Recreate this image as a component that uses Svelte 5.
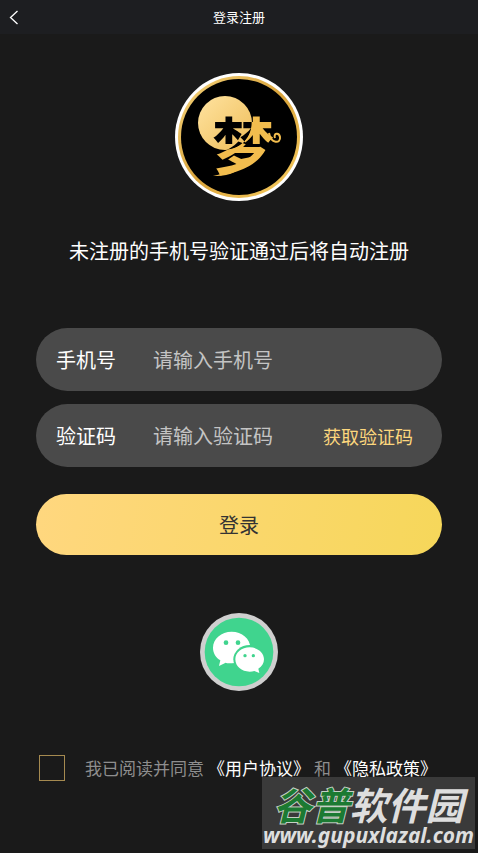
<script>
    let phone = $state('')
    let code = $state('')
    let agreed = $state(false)

    function login(event) {
        event.preventDefault()
    }
</script>

<div class="page">
    <header>
        <button class="back" aria-label="返回">
            <svg viewBox="0 0 10 16" width="10" height="16">
                <path d="M8.5 2 L1.5 8.5 L8.5 15" />
            </svg>
        </button>
        <h1>登录注册</h1>
    </header>

    <main>
        <svg class="logo" viewBox="0 0 128 128">
            <defs>
                <linearGradient id="ring" x1="0" y1="0" x2="1" y2="1">
                    <stop offset="0" stop-color="#f6d57e" />
                    <stop offset="0.5" stop-color="#d9a33a" />
                    <stop offset="1" stop-color="#f9cf62" />
                </linearGradient>
                <linearGradient id="moon" x1="0" y1="0" x2="1" y2="1">
                    <stop offset="0" stop-color="#ffe3a0" />
                    <stop offset="1" stop-color="#eebd59" />
                </linearGradient>
                <!-- black over the moon, gold outside it -->
                <radialGradient id="ink" gradientUnits="userSpaceOnUse" cx="50" cy="50" r="27">
                    <stop offset="0.97" stop-color="#000" />
                    <stop offset="1" stop-color="#f2bd4e" />
                </radialGradient>
            </defs>
            <circle cx="64" cy="64" r="64" fill="#fff" />
            <circle cx="64" cy="64" r="61" fill="url(#ring)" />
            <circle cx="64" cy="64" r="58" fill="#000" />
            <circle cx="50" cy="50" r="27" fill="url(#moon)" />
            <text x="37" y="97" fill="url(#ink)">梦</text>
            <path d="M94 60 C96 71 106 71 105 64 C104 59 98 60 100 65" fill="none" stroke="#f2bd4e" stroke-width="2" />
            <path d="M66 86 C60 95 50 101 38 103 C52 104 67 99 76 84 Z" fill="#f2bd4e" />
        </svg>

        <p class="tip">未注册的手机号验证通过后将自动注册</p>

        <form onsubmit={login}>
            <div class="field">
                <label for="phone">手机号</label>
                <input type="tel" id="phone" placeholder="请输入手机号" bind:value={phone}>
            </div>
            <div class="field">
                <label for="code">验证码</label>
                <input type="text" id="code" placeholder="请输入验证码" bind:value={code}>
                <button type="button" class="send">获取验证码</button>
            </div>
            <button type="submit" class="login">登录</button>
        </form>

        <button class="wechat" aria-label="微信登录">
            <svg viewBox="30 21 234 234">
                <circle cx="147" cy="138" r="117" fill="#cfcfcf" />
                <circle cx="147" cy="138" r="103" fill="#40d48e" />
                <path d="M125 77 C94 77 69 98 69 125 C69 141 77 154 91 163 L87 180 L107 170 C113 172 119 172 125 172 C156 172 181 152 181 125 C181 98 156 77 125 77 Z" fill="#fff" />
                <ellipse cx="179" cy="160" rx="49" ry="43" fill="#40d48e" />
                <path d="M179 124 C155 124 136 140 136 160 C136 181 155 197 179 197 C184 197 189 196 193 195 L208 201 L205 188 C216 181 222 171 222 160 C222 140 203 124 179 124 Z" fill="#fff" />
                <g fill="#40d48e">
                    <circle cx="108" cy="110" r="7" />
                    <circle cx="144" cy="110" r="7" />
                    <circle cx="165" cy="149" r="5" />
                    <circle cx="190" cy="149" r="5" />
                </g>
            </svg>
        </button>

        <div class="agree">
            <input type="checkbox" id="agree" bind:checked={agreed}>
            <div>
                <label for="agree">我已阅读并同意</label><a href="#user">《用户协议》</a>和<a href="#privacy">《隐私政策》</a>
            </div>
        </div>
    </main>

    <aside class="watermark">
        <div class="site"><span>谷普</span>软件园</div>
        <div class="url">www.gupuxlazal.com</div>
    </aside>
</div>

<style>
    :global(body) {
        background: #1a1a1a;
    }

    .page {
        position: relative;
        min-height: 100vh;
        color: #fff;
        font-family: "Noto Sans CJK SC", sans-serif;
        font-size: 20px;
    }

    button, input {
        font: inherit;
        color: inherit;
        background: none;
        border: 0;
        padding: 0;
        margin: 0;
    }

    button {
        cursor: pointer;
    }

    header {
        display: grid;
        grid-template-columns: 40px 1fr 40px;
        align-items: center;
        height: 34px;
        background: #1d1e21;
    }

    .back {
        display: flex;
        padding-left: 9px;
    }

    .back path {
        fill: none;
        stroke: #fff;
        stroke-width: 1.3;
    }

    h1 {
        margin: 0;
        padding-bottom: 2px;
        font-size: 13px;
        font-weight: 400;
        text-align: center;
    }

    main {
        display: flex;
        flex-direction: column;
        align-items: center;
        padding: 39px 36px 72px;
    }

    .logo {
        width: 128px;
        height: 128px;
    }

    .logo text {
        font-size: 62px;
        font-weight: 700;
    }

    .tip {
        margin: 34px 0 61px;
        line-height: 32px;
        white-space: nowrap;
    }

    form {
        width: 100%;
    }

    .field {
        display: flex;
        align-items: center;
        height: 63px;
        margin-bottom: 13px;
        padding: 0 29px 0 20px;
        border-radius: 32px;
        background: #4a4a4a;
    }

    .field label {
        width: 97px;
        flex-shrink: 0;
    }

    .field input {
        flex: 1;
        min-width: 0;
        outline: none;
    }

    .field input::placeholder {
        color: #c4c4c4;
        opacity: 1;
    }

    .send {
        flex-shrink: 0;
        color: #fdd77d;
        font-size: 18px;
    }

    .login {
        display: block;
        width: 100%;
        height: 61px;
        margin-top: 27px;
        border-radius: 32px;
        background: linear-gradient(100deg, #ffd77f, #f6d75a);
        color: #333;
    }

    .wechat {
        display: flex;
        width: 78px;
        height: 78px;
        margin-top: 58px;
    }

    .wechat svg {
        width: 100%;
    }

    .agree {
        display: flex;
        align-items: center;
        align-self: stretch;
        gap: 20px;
        margin-top: 64px;
        padding-left: 3px;
        color: #8e8e8e;
        font-size: 17px;
        line-height: 26px;
        white-space: nowrap;
    }

    .agree input {
        appearance: none;
        flex-shrink: 0;
        width: 26px;
        height: 26px;
        border: 1px solid #a58a50;
    }

    .agree input:checked {
        background: #fdd77d;
    }

    .agree a {
        margin: 0 4px;
        color: #fff;
        text-decoration: none;
    }

    .watermark {
        position: absolute;
        right: 3px;
        bottom: 4px;
        width: 213px;
        height: 72px;
        background: #3a3a3a;
        color: #dedede;
        font-style: italic;
        font-weight: 700;
        text-align: center;
        white-space: nowrap;
    }

    .site {
        padding-top: 6px;
        font-size: 38px;
        line-height: 42px;
    }

    .site span {
        color: #1c7a32;
        -webkit-text-stroke: 2px #c5d0c5;
        paint-order: stroke fill;
    }

    .url {
        font-family: "Noto Sans", sans-serif;
        font-size: 21px;
        line-height: 20px;
    }
</style>
